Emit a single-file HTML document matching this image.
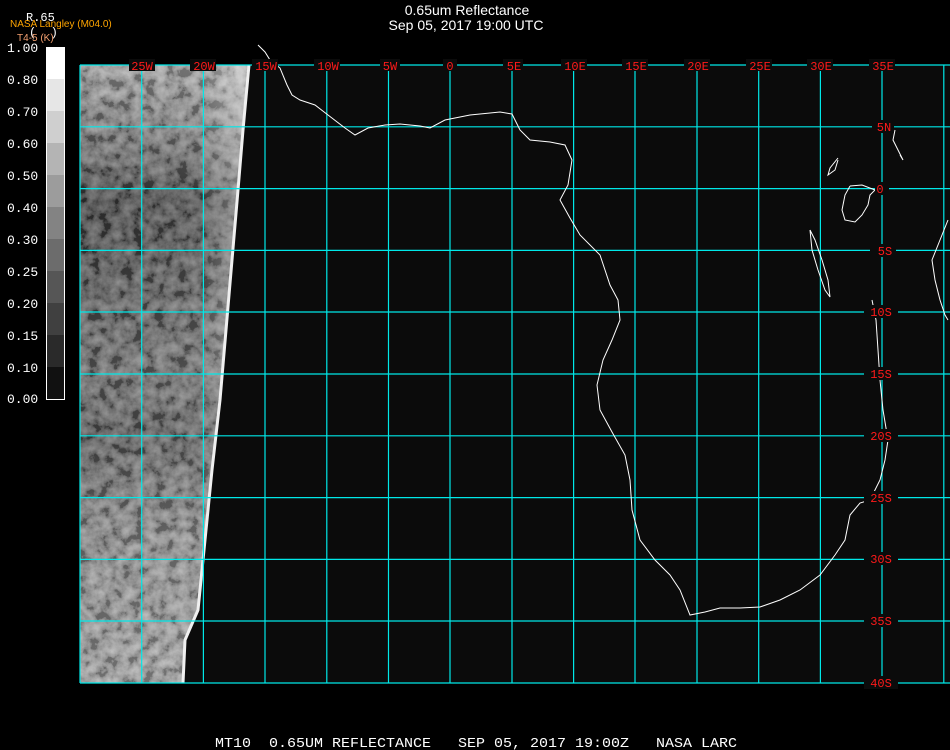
<!DOCTYPE html>
<html><head><meta charset="utf-8"><style>
html,body{margin:0;padding:0;background:#000;}
body{width:950px;height:750px;overflow:hidden;position:relative;font-family:"Liberation Sans",sans-serif;}
svg{position:absolute;left:0;top:0;}
</style></head><body>
<svg width="950" height="750" viewBox="0 0 950 750" xmlns="http://www.w3.org/2000/svg">
<defs>
<filter id="tx" x="0" y="0" width="100%" height="100%" filterUnits="userSpaceOnUse">
<feTurbulence type="fractalNoise" baseFrequency="0.09" numOctaves="4" seed="5"/>
<feColorMatrix type="matrix" values="1.6 0 0 0 -0.5  1.6 0 0 0 -0.5  1.6 0 0 0 -0.5  0 0 0 0 0.35"/>
</filter>
<clipPath id="cp"><polygon points="80,65 249,65 243,130 238,190 232,260 226,330 220,400 212,470 205,540 198,610 185,640 183,683 80,683"/></clipPath>
<linearGradient id="g" x1="0" y1="0" x2="0" y2="1">
<stop offset="0" stop-color="#a8a8a8"/>
<stop offset="0.13" stop-color="#707070"/>
<stop offset="0.22" stop-color="#3c3c3c"/>
<stop offset="0.35" stop-color="#505050"/>
<stop offset="0.5" stop-color="#6a6a6a"/>
<stop offset="0.6" stop-color="#555"/>
<stop offset="0.75" stop-color="#8a8a8a"/>
<stop offset="1" stop-color="#a8a8a8"/>
</linearGradient>
<linearGradient id="gh" x1="0" y1="0" x2="1" y2="0">
<stop offset="0" stop-color="#fff" stop-opacity="0"/>
<stop offset="0.7" stop-color="#fff" stop-opacity="0.05"/>
<stop offset="1" stop-color="#fff" stop-opacity="0.45"/>
</linearGradient>
</defs>
<rect x="80" y="65" width="870" height="618" fill="#0b0b0b"/>
<g clip-path="url(#cp)">
<rect x="80" y="65" width="170" height="618" fill="url(#g)"/>
<rect x="80" y="65" width="170" height="618" fill="#000" filter="url(#tx)"/>
<rect x="80" y="65" width="170" height="618" fill="url(#gh)"/>
</g>
<polyline points="249,65 243,130 238,190 232,260 226,330 220,400 212,470 205,540 198,610 185,640 183,683" fill="none" stroke="#f0f0f0" stroke-width="3"/>
<g stroke="#00e8e8" stroke-width="1.2">
<line x1="80" y1="65" x2="80" y2="683"/><line x1="141.7" y1="65" x2="141.7" y2="683"/><line x1="203.4" y1="65" x2="203.4" y2="683"/><line x1="265" y1="65" x2="265" y2="683"/><line x1="326.8" y1="65" x2="326.8" y2="683"/><line x1="388.5" y1="65" x2="388.5" y2="683"/><line x1="450" y1="65" x2="450" y2="683"/><line x1="512" y1="65" x2="512" y2="683"/><line x1="573.6" y1="65" x2="573.6" y2="683"/><line x1="635" y1="65" x2="635" y2="683"/><line x1="697" y1="65" x2="697" y2="683"/><line x1="758.7" y1="65" x2="758.7" y2="683"/><line x1="820.4" y1="65" x2="820.4" y2="683"/><line x1="882" y1="65" x2="882" y2="683"/><line x1="943.8" y1="65" x2="943.8" y2="683"/>
<line x1="80" y1="65" x2="950" y2="65"/><line x1="80" y1="126.8" x2="950" y2="126.8"/><line x1="80" y1="188.6" x2="950" y2="188.6"/><line x1="80" y1="250.4" x2="950" y2="250.4"/><line x1="80" y1="312" x2="950" y2="312"/><line x1="80" y1="374" x2="950" y2="374"/><line x1="80" y1="435.8" x2="950" y2="435.8"/><line x1="80" y1="497.6" x2="950" y2="497.6"/><line x1="80" y1="559.4" x2="950" y2="559.4"/><line x1="80" y1="621" x2="950" y2="621"/><line x1="80" y1="683" x2="950" y2="683"/>
</g>
<polyline fill="none" stroke="#fff" stroke-width="1" points="258,45 265,52 270,60 280,68 287,85 292,95 300,100 315,105 328,115 345,128 355,135 368,128 385,125 400,124 420,126 430,128 445,120 470,115 500,112 512,114 520,130 530,140 550,142 565,145 572,160 568,185 560,200 570,218 580,235 600,255 605,270 610,285 618,300 620,320 612,340 603,360 597,385 600,410 612,432 625,455 630,480 632,510 640,540 655,560 670,575 680,590 690,615 705,612 720,608 740,608 760,607 780,600 800,590 820,575 835,555 845,540 850,515 860,503 870,500 880,480 885,460 888,440 883,410 880,380 878,350 876,320 872,300"/>
<polyline fill="none" stroke="#fff" stroke-width="1" points="895,130 893,140 898,150 903,160 900,155"/>
<polyline fill="none" stroke="#fff" stroke-width="1" points="838,158 830,168 828,175 835,170 838,160"/>
<polyline fill="none" stroke="#fff" stroke-width="1" points="850,186 845,195 842,210 845,220 855,222 862,215 868,205 870,195 875,190 862,185 850,186"/>
<polyline fill="none" stroke="#fff" stroke-width="1" points="810,230 812,250 818,270 825,290 830,297 828,280 822,260 815,240 810,230"/>
<polyline fill="none" stroke="#fff" stroke-width="1" points="948,220 940,240 932,260 935,280 940,300 945,315 948,320"/>
<g font-family="Liberation Mono,monospace" font-size="12" fill="#ff1a1a" text-anchor="middle">
<g fill="#0b0b0b"><rect x="129" y="59" width="26" height="12"/><rect x="190" y="59" width="26" height="12"/><rect x="252" y="59" width="26" height="12"/><rect x="314" y="59" width="26" height="12"/><rect x="380" y="59" width="20" height="12"/><rect x="443" y="59" width="14" height="12"/><rect x="503" y="59" width="20" height="12"/><rect x="561" y="59" width="26" height="12"/><rect x="622" y="59" width="26" height="12"/><rect x="684" y="59" width="26" height="12"/><rect x="746" y="59" width="26" height="12"/><rect x="807" y="59" width="26" height="12"/><rect x="869" y="59" width="26" height="12"/>
<rect x="872" y="120" width="22" height="13"/><rect x="875" y="182" width="14" height="13"/><rect x="870" y="244" width="26" height="13"/><rect x="864" y="305" width="34" height="13"/><rect x="864" y="367" width="34" height="13"/><rect x="864" y="429" width="34" height="13"/><rect x="864" y="491" width="34" height="13"/><rect x="864" y="552" width="34" height="13"/><rect x="864" y="614" width="34" height="13"/><rect x="864" y="676" width="34" height="13"/></g>
<text x="142" y="70">25W</text><text x="204" y="70">20W</text><text x="266" y="70">15W</text><text x="328" y="70">10W</text><text x="390" y="70">5W</text><text x="450" y="70">0</text><text x="514" y="70">5E</text><text x="575" y="70">10E</text><text x="636" y="70">15E</text><text x="698" y="70">20E</text><text x="760" y="70">25E</text><text x="821" y="70">30E</text><text x="883" y="70">35E</text>
<text x="884" y="131">5N</text><text x="880" y="193">0</text><text x="885" y="255">5S</text><text x="881" y="316">10S</text><text x="881" y="378">15S</text><text x="881" y="440">20S</text><text x="881" y="502">25S</text><text x="881" y="563">30S</text><text x="881" y="625">35S</text><text x="881" y="687">40S</text>
</g>
<g>
<rect x="46" y="47" width="19" height="32" fill="#ffffff"/><rect x="46" y="79" width="19" height="32" fill="#e6e6e6"/><rect x="46" y="111" width="19" height="32" fill="#cfcfcf"/><rect x="46" y="143" width="19" height="32" fill="#b4b4b4"/><rect x="46" y="175" width="19" height="32" fill="#9c9c9c"/><rect x="46" y="207" width="19" height="32" fill="#838383"/><rect x="46" y="239" width="19" height="32" fill="#6c6c6c"/><rect x="46" y="271" width="19" height="32" fill="#565656"/><rect x="46" y="303" width="19" height="32" fill="#404040"/><rect x="46" y="335" width="19" height="32" fill="#2a2a2a"/><rect x="46" y="367" width="19" height="32" fill="#111"/>
<rect x="46.5" y="47.5" width="18" height="352" fill="none" stroke="#fff"/>
</g>
<g font-family="Liberation Mono,monospace" font-size="13" fill="#fff">
<text x="7" y="52">1.00</text><text x="7" y="84">0.80</text><text x="7" y="116">0.70</text><text x="7" y="148">0.60</text><text x="7" y="180">0.50</text><text x="7" y="212">0.40</text><text x="7" y="244">0.30</text><text x="7" y="276">0.25</text><text x="7" y="308">0.20</text><text x="7" y="340">0.15</text><text x="7" y="372">0.10</text><text x="7" y="403">0.00</text>
<text x="26" y="21" font-size="12">R.65</text><text x="29" y="36" font-size="12" xml:space="preserve" style="white-space:pre">(  )</text>
</g>
<text x="10" y="27" font-family="Liberation Sans,sans-serif" font-size="10" fill="#ffa500">NASA Langley (M04.0)</text>
<text x="17" y="41" font-family="Liberation Sans,sans-serif" font-size="10" fill="#f4a070">T4-5 (K)</text>
<text x="467" y="15" text-anchor="middle" font-size="14" fill="#fff">0.65um Reflectance</text>
<text x="466" y="30" text-anchor="middle" font-size="14" fill="#fff">Sep 05, 2017 19:00 UTC</text>
<text x="215" y="747" font-family="Liberation Mono,monospace" font-size="14" fill="#fff" textLength="522" lengthAdjust="spacingAndGlyphs" xml:space="preserve" style="white-space:pre">MT10  0.65UM REFLECTANCE   SEP 05, 2017 19:00Z   NASA LARC</text>
</svg>
</body></html>
